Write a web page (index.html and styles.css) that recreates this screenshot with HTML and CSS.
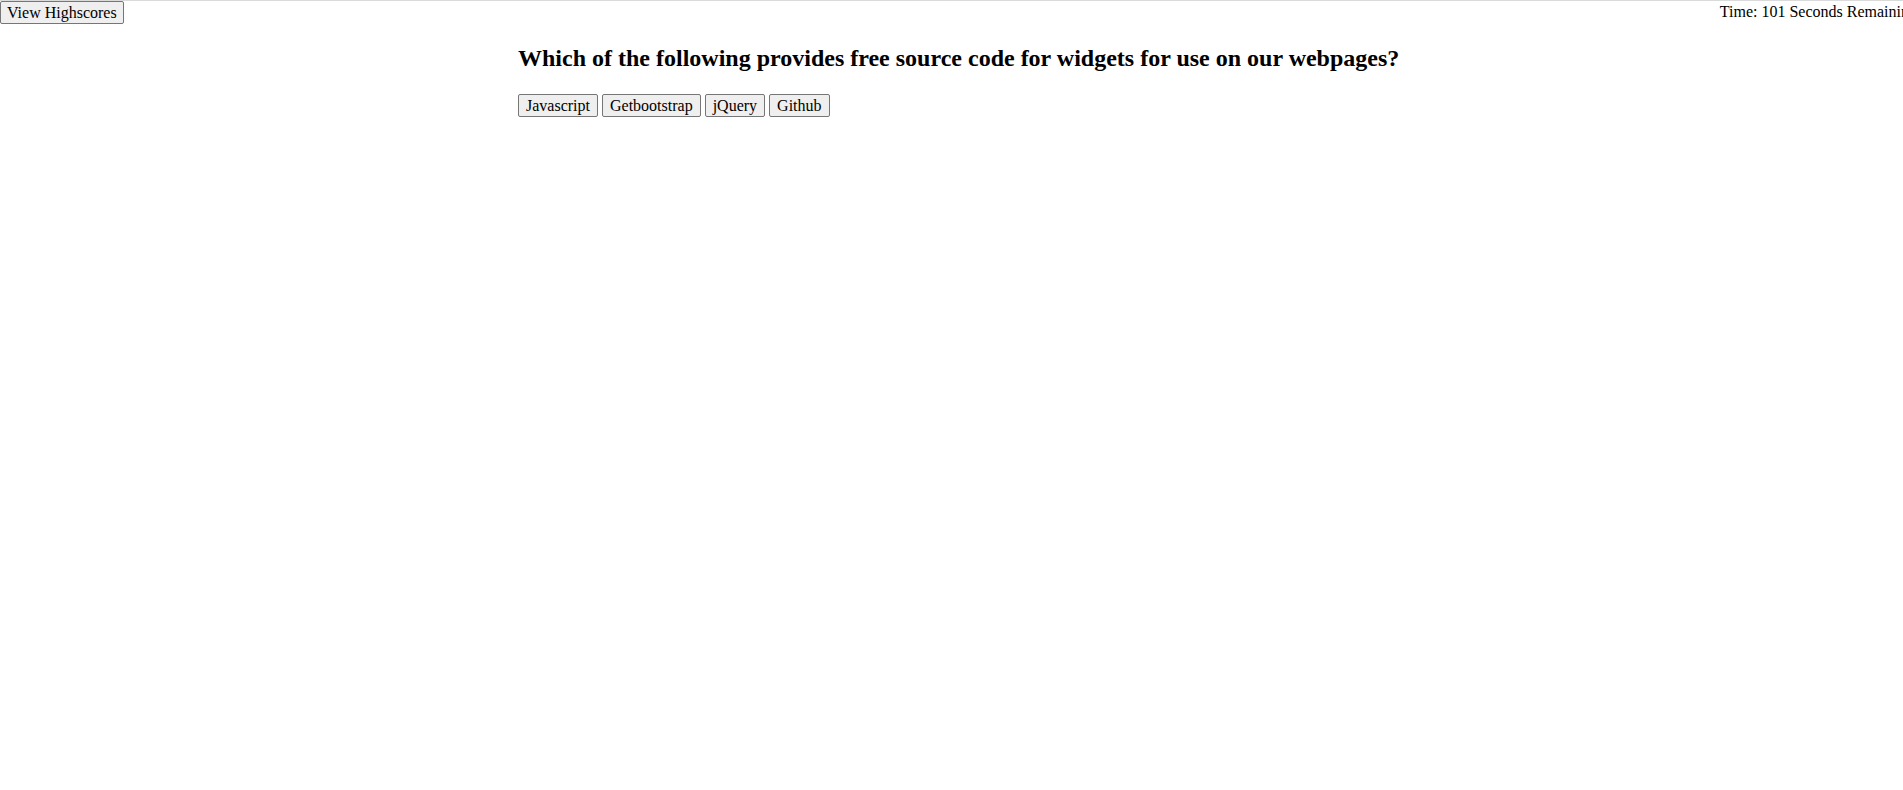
FILE: index.html
```html
<!DOCTYPE html>
<html>
<head>
<meta charset="utf-8">
<title>Quiz</title>
<link rel="stylesheet" href="styles.css">
</head>
<body>
<header class="top">
  <button class="btn">View Highscores</button>
  <span class="timer">Time: 101 Seconds Remaining</span>
</header>
<main class="quiz">
  <h2 class="question">Which of the following provides free source code for widgets for use on our webpages?</h2>
  <div class="answers">
    <button class="btn answer">Javascript</button>
    <button class="btn answer">Getbootstrap</button>
    <button class="btn answer">jQuery</button>
    <button class="btn answer">Github</button>
  </div>
</main>
</body>
</html>
```
FILE: styles.css
```css
html, body {
  margin: 0;
  padding: 0;
  background: #fff;
  color: #000;
  font-family: "Liberation Serif", "Times New Roman", serif;
  font-size: 16px;
  overflow-x: hidden;
}
body {
  border-top: 1px solid #dadada;
}
.top {
  display: flex;
  justify-content: space-between;
  align-items: flex-start;
  overflow: hidden;
}
.timer {
  flex-shrink: 0;
  white-space: nowrap;
  margin-right: -14px;
  line-height: 20px;
  padding-top: 1px;
}
.btn {
  font-family: "Liberation Serif", "Times New Roman", serif;
  font-size: 16px;
  color: #000;
  background: #efefef;
  border: 1px solid #767676;
  border-radius: 2px;
  padding: 1px 6px;
  margin: 0;
  line-height: 19px;
}
.answer {
  padding: 1px 7px;
}
.quiz {
  width: 867px;
  margin: 0 auto;
}
.question {
  font-size: 24px;
  font-weight: bold;
  margin: 21px 0 22px;
  white-space: nowrap;
}
.answers {
  display: flex;
  gap: 4px;
}
```
